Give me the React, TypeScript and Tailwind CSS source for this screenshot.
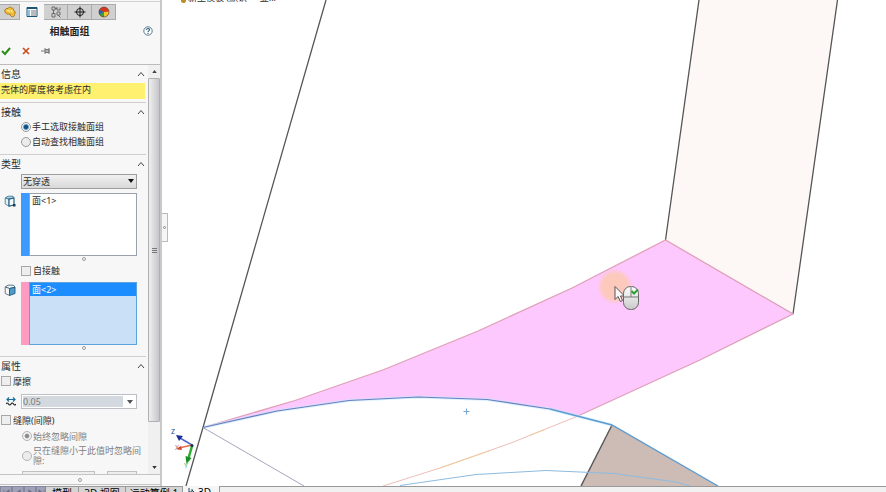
import { useState } from 'react';
import type { ReactNode } from 'react';

const RADIO =
  "size-[10px] shrink-0 appearance-none rounded-full border border-[#9a9a9a] bg-[#ececec] checked:bg-[radial-gradient(circle,#0d4f86_0_30%,#7fb2d6_48%,#f4f4f4_60%)] disabled:border-[#b4b4b4] disabled:checked:bg-[radial-gradient(circle,#8c8c8c_0_30%,#f1f1f1_50%)]";
const CHECK = "size-[10px] shrink-0 appearance-none border border-[#a8a8a8] bg-[#eeeeee] checked:bg-[#4a86b8]";

function Chevron() {
  return (
    <svg viewBox="0 0 8 6" className="h-[6px] w-[8px]" fill="none" stroke="#444" strokeWidth="1">
      <path d="M1 5 4 1.5 7 5" />
    </svg>
  );
}

function Section({ title, children }: { title: string; children: ReactNode }) {
  const [open, setOpen] = useState(true);
  return (
    <section className="border-b border-[#cfcfcf] pb-[3px] last:border-0">
      <h2 className="pt-px">
        <button type="button" onClick={() => setOpen(!open)} className="flex h-[16px] w-full items-center justify-between pr-px pl-px text-[10px] leading-none">
          {title}
          <Chevron />
        </button>
      </h2>
      {open && children}
    </section>
  );
}

function Handle() {
  return (
    <div className="flex h-[5px] items-center justify-center pl-[30px]">
      <span className="size-[4px] rounded-full border border-[#9b9b9b] bg-white" />
    </div>
  );
}

function FaceIcon({ solid }: { solid?: boolean }) {
  return (
    <svg viewBox="0 0 12 13" className="mt-[2px] h-[13px] w-[12px]" strokeLinejoin="round">
      {solid ? (
        <>
          <path d="M1.200 3 4 1.200h5.500L11 3.200 5.500 4.500z" fill="#f2f7fa" stroke="#35556a" strokeWidth=".8" />
          <path d="M1.200 3 5.500 4.500v7L1.200 9.500z" fill="#f6f6f6" stroke="#4a5d69" strokeWidth=".8" />
          <path d="M5.500 4.500 11 3.200v6.300l-5.500 2z" fill="#4f9bc9" stroke="#245a7c" strokeWidth=".9" />
        </>
      ) : (
        <>
          <path d="M1.200 3 4 1.200h5L10 3 5 4.200z" fill="#a9d2ea" stroke="#35708f" strokeWidth=".8" />
          <path d="M1.200 3 5 4.200v7L1.200 9z" fill="#e6f2f8" stroke="#35708f" strokeWidth=".8" />
          <path d="M5 4.200 10 3v7l-5 1.200z" fill="#f4f9fb" stroke="#2a5f80" strokeWidth="1.200" />
          <path d="M9 9h2.500v2.500H9z" fill="#16384c" />
        </>
      )}
    </svg>
  );
}

function TabIcon({ kind }: { kind: number }) {
  return (
    <svg viewBox="0 0 12 12" className="size-[12px]" fill="none">
      {kind === 0 && (
        <>
          <path d="M.8 5.500C.5 3.500 2 2 4 2.500 4.500 1 6.500.8 7.500 2c1.500-.3 2.300 1 2 2.200 1.800.8 2.200 3 1 4.300.2 1.800-1.500 2.800-3 2-1-.5-1.300-1.500-1.300-2.300C4 8.300 1.200 8 .8 5.500z" fill="#f0be3a" stroke="#9b6a0c" strokeWidth=".8" />
          <path d="M3 4.500c1.500-.5 2.500.3 3 1.500M7.500 4 8 6.500" stroke="#fff0a8" strokeWidth="1.200" />
        </>
      )}
      {kind === 1 && (
        <>
          <path d="M1 1.500h10v9H1z" fill="#fff" stroke="#1e5478" />
          <path d="M1 1h10v2H1z" fill="#1e5478" />
          <path d="M2 5h2M2 7h2M2 9h2" stroke="#1f82bd" strokeWidth="1.200" />
          <path d="M5 5h5M5 7h5M5 9h5" stroke="#777" />
        </>
      )}
      {kind === 2 && (
        <g stroke="#626262" strokeWidth=".9">
          <path d="M2 1h3v3H2zM2 7.500h3v3.500H2zM7 6h3v3H7zM3.500 4v3.500M5 2.500h2M7 1v3h3V1.500M8 9l2.500 2.500" />
        </g>
      )}
      {kind === 3 && (
        <g stroke="#181818">
          <circle cx="6" cy="6" r="3.500" />
          <path d="M6 .5v11M.5 6h11" />
        </g>
      )}
      {kind === 4 && (
        <>
          <circle cx="6" cy="6" r="5" fill="#d8351f" />
          <path d="M6 6 1.500 3.500A5 5 0 0 0 2 9z" fill="#3464a0" />
          <path d="M6 6 1.500 8.500A5 5 0 0 0 6 11z" fill="#35a044" />
          <path d="m6 6 5-.5a5 5 0 0 1-5 5.500z" fill="#f1c52c" />
          <circle cx="6" cy="6" r="5" stroke="#5b4238" strokeWidth=".6" />
        </>
      )}
    </svg>
  );
}

const PANEL_TABS = ['特征管理', '属性管理', '配置管理', '尺寸专家', '外观管理'];

function PropertyPanel() {
  const [tab, setTab] = useState(1);
  return (
    <aside className="flex w-[162px] shrink-0 flex-col border-r-2 border-[#c9c9c9] bg-[#f7f7f7]">
      <nav className="mt-px flex h-[19px] shrink-0 border-t border-[#d2d2d2] pt-[2px]">
        {PANEL_TABS.map((name, i) => (
          <button
            key={name}
            type="button"
            aria-label={name}
            onClick={() => setTab(i)}
            className={`flex h-[16px] items-center justify-center first:w-[20px] ${
              tab === i ? 'w-[24px] bg-[#f7f7f7]' : 'w-[24px] border border-l-0 border-[#a9a9a9] bg-[#d0d0d0]'
            }`}
          >
            <TabIcon kind={i} />
          </button>
        ))}
      </nav>
      <header className="flex h-[22px] shrink-0 items-center pr-[7px]">
        <h1 className="flex-1 pr-[4px] text-center text-[10px] leading-none font-bold text-[#222]">相触面组</h1>
        <button type="button" aria-label="帮助">
          <svg viewBox="0 0 10 10" className="size-[10px]" fill="none" stroke="#315e7c">
            <circle cx="5" cy="5" r="4.200" fill="#fff" strokeWidth=".8" />
            <path d="M3.500 4c0-2 3-2 3-.3C6.500 5 5 4.800 5 6.200M5 7v1" strokeWidth="1.100" />
          </svg>
        </button>
      </header>
      <div className="flex h-[23px] shrink-0 items-start gap-[10px] border-b border-[#bcbcbc] pt-[4px] pl-px">
        <button type="button" aria-label="确定">
          <svg viewBox="0 0 10 10" className="size-[10px]" fill="none" stroke="#2e8a16" strokeWidth="2"><path d="m1 5 3 3 5-6" /></svg>
        </button>
        <button type="button" aria-label="取消">
          <svg viewBox="0 0 10 10" className="size-[10px]" fill="none" stroke="#cc4d1c" strokeWidth="1.700"><path d="m2 2 6 6M8 2 2 8" /></svg>
        </button>
        <button type="button" aria-label="保持可见">
          <svg viewBox="0 0 10 10" className="size-[10px]" fill="none" stroke="#777"><path d="M0 5h4M4 2v6M4 3.500h4v3H4M8 2v6M4 5h4" /></svg>
        </button>
      </div>
      <div className="flex min-h-0 flex-1">
        <div className="min-w-0 flex-1 overflow-hidden">
          <Section title="信息">
            <p className="mt-px mr-px h-[16px] bg-[#fff06f] pl-px leading-[14px]">壳体的厚度将考虑在内</p>
          </Section>
          <Section title="接触">
            <div className="-mt-px flex flex-col pb-[2px] pl-[21px]">
              <label className="flex h-[15px] items-center gap-px">
                <input type="radio" name="pick" defaultChecked className={RADIO} />
                手工选取接触面组
              </label>
              <label className="flex h-[15px] items-center gap-px">
                <input type="radio" name="pick" className={RADIO} />
                自动查找相触面组
              </label>
            </div>
          </Section>
          <Section title="类型">
            <div className="mt-[2px] pr-[9px]">
              <div className="relative ml-[21px]">
                <select aria-label="接触类型" className="block h-[15px] w-full appearance-none border border-[#9d9d9d] bg-linear-to-b from-[#f1f1f1] to-[#d9d9d9] pl-px leading-none">
                  <option>无穿透</option>
                  <option>接合</option>
                </select>
                <svg viewBox="0 0 6 4" className="pointer-events-none absolute top-[5px] right-[3px] h-[4px] w-[6px]"><path d="M0 0h6L3 4z" fill="#111" /></svg>
              </div>
              <div className="mt-[4px] flex">
                <div className="w-[21px] shrink-0 pl-[4px]"><FaceIcon /></div>
                <div className="w-[8px] bg-[#3d9bff]" />
                <ul role="listbox" aria-label="面组 1" className="h-[63px] flex-1 border border-[#9aa3ad] bg-white">
                  <li role="option" aria-selected="false" className="pl-[2px] leading-[14px]">面&lt;1&gt;</li>
                </ul>
              </div>
              <Handle />
              <label className="mt-[4px] flex h-[11px] items-center gap-[2px] pl-[21px]">
                <input type="checkbox" className={CHECK} />
                自接触
              </label>
              <div className="mt-[6px] flex">
                <div className="w-[21px] shrink-0 pl-[4px]"><FaceIcon solid /></div>
                <div className="w-[8px] bg-[#ff9ac0]" />
                <ul role="listbox" aria-label="面组 2" className="h-[63px] flex-1 border border-[#5ba3dc] bg-[#c9e0f7]">
                  <li role="option" aria-selected="true" className="h-[13px] bg-[#1c8dff] pl-[2px] leading-[13px] text-white">面&lt;2&gt;</li>
                </ul>
              </div>
              <Handle />
            </div>
            <div className="h-[3px]" />
          </Section>
          <Section title="属性">
            <label className="flex h-[14px] items-center gap-[2px] pl-px">
              <input type="checkbox" className={CHECK} />
              摩擦
            </label>
            <div className="mt-[6px] flex h-[15px] items-center pr-[9px]">
              <div className="w-[21px] shrink-0 pl-[6px]">
                <svg viewBox="0 0 10 9" className="h-[9px] w-[10px]" fill="none" strokeWidth="1.200">
                  <path d="M1 2.500h8M3 .5l-2 2 2 2M7 .5l2 2-2 2" stroke="#1d6f9c" />
                  <path d="M0 7q1.200-2 2.500 0t2.500 0 2.500 0 2.500 0" stroke="#222" />
                </svg>
              </div>
              <div className="flex h-full min-w-0 flex-1 border border-[#bcc0c4] bg-white">
                <input aria-label="摩擦系数" disabled defaultValue="0.05" className="my-px ml-px min-w-0 flex-1 bg-[#d3d9de] text-[#7c7c7c]" />
                <button type="button" aria-label="系数列表" disabled className="flex w-[13px] items-center justify-center">
                  <svg viewBox="0 0 6 4" className="h-[4px] w-[6px]"><path d="M0 0h6L3 4z" fill="#555" /></svg>
                </button>
              </div>
            </div>
            <label className="mt-[4px] flex h-[14px] items-center gap-[2px] pl-px">
              <input type="checkbox" className={CHECK} />
              缝隙(间隙)
            </label>
            <div className="mt-[2px] flex flex-col gap-px pl-[22px] text-[#808080]">
              <label className="flex h-[14px] items-center gap-px">
                <input type="radio" name="gap" disabled defaultChecked className={RADIO} />
                始终忽略间隙
              </label>
              <label className="mt-[2px] flex items-center gap-px leading-[10px]">
                <input type="radio" name="gap" disabled className={RADIO} />
                只在缝隙小于此值时忽略间隙:
              </label>
              <div className="mt-[4px] flex gap-[12px] pr-[9px]">
                <input aria-label="间隙值" disabled className="h-[15px] min-w-0 flex-1 border border-[#c0c0c0] bg-[#eee]" />
                <input aria-label="单位" disabled className="h-[15px] w-[30px] border border-[#c0c0c0] bg-[#eee]" />
              </div>
            </div>
          </Section>
        </div>
        <div className="ml-[2px] flex w-[12px] shrink-0 flex-col items-center bg-[#f0f0f0]">
          <button type="button" aria-label="向上滚动" className="flex h-[13px] w-full items-center justify-center">
            <svg viewBox="0 0 6 4" className="h-[3px] w-[5px]"><path d="M0 4h6L3 0z" fill="#444" /></svg>
          </button>
          <div className="flex h-[344px] w-full flex-col items-center justify-center gap-px rounded-[1px] border border-[#b0b0b0] bg-linear-to-r from-[#efefef] to-[#c6c6cb]">
            <span className="h-px w-[5px] bg-[#777]" />
            <span className="h-px w-[5px] bg-[#777]" />
            <span className="h-px w-[5px] bg-[#777]" />
          </div>
          <button type="button" aria-label="向下滚动" className="mt-auto flex h-[13px] w-full items-center justify-center">
            <svg viewBox="0 0 6 4" className="h-[3px] w-[5px]"><path d="M0 0h6L3 4z" fill="#333" /></svg>
          </button>
        </div>
      </div>
      <footer className="mb-px flex h-[11px] shrink-0 items-center justify-center border-y border-[#c4c4c4]">
        <span className="size-[4px] rounded-full border border-[#9b9b9b] bg-white" />
      </footer>
    </aside>
  );
}

function Viewport() {
  return (
    <main className="relative min-w-0 flex-1 overflow-hidden bg-white">
      <svg viewBox="162 0 724 486" className="block h-full w-full" preserveAspectRatio="xMinYMin slice" fill="none">
        <defs>
          <linearGradient id="mouse" x1="0" y1="0" x2="0" y2="1">
            <stop offset="0" stopColor="#fff" />
            <stop offset="1" stopColor="#c9c9c9" />
          </linearGradient>
          <radialGradient id="glow">
            <stop offset=".7" stopColor="#fdc9bd" />
            <stop offset="1" stopColor="#fdc9bd" stopOpacity="0" />
          </radialGradient>
        </defs>
        <path d="M699 0h139l-45 314-128-74z" fill="#fdf8f5" />
        <path d="M699 0 665.500 240M837.500 0 793 314" stroke="#555" strokeWidth="1.300" />
        <path d="M203 427.500 295 400.500 384 369.500 478 331 572 288 665.500 240 793 314 700 360 578 416 550 409 487 399.500 418 397 349 400.500 277 411z" fill="#fdc8fd" />
        <path d="M203 427.500 295 400.500 384 369.500 478 331 572 288 665.500 240 793 314 700 360 578 416" stroke="#dfa0b8" strokeWidth="1.300" />
        <path d="M578 416 511 443 440 468 383 486" stroke="#edbdb9" />
        <path d="m545 429.500-16 6M489 451l-49 17" stroke="#efcf9e" />
        <path d="M612 425 717 486H581z" fill="#cdbbb5" />
        <path d="M612 425 581 486" stroke="#555" strokeWidth="1.400" />
        <path d="M203 427.500 277 411 349 400.500 418 397 487 399.500 550 409 612 425" stroke="#c5eaff" strokeWidth="3" opacity=".6" />
        <path d="M203 427.500 277 411 349 400.500 418 397 487 399.500 550 409" stroke="#6980be" strokeWidth="1.200" />
        <path d="M550 409 612 425 718 486" stroke="#5d9bd0" strokeWidth="1.400" />
        <path d="M400 485.500 476 474.500 546 470.500 614 473.500 676 482 690 486" stroke="#8dbbe0" />
        <path d="M326 0 203 427.500 186 486" stroke="#555" strokeWidth="1.300" />
        <path d="m203 427.500 101 58.500" stroke="#a6a6bd" />
        <path d="M466.500 408.500v6M463.500 411.500h6" stroke="#79a6d4" />
        <circle cx="615" cy="286.500" r="18" fill="url(#glow)" />
        <path d="M615 286.500v13l3-3 2.500 5 2-1-2-4.500h4z" fill="#f8f8f8" stroke="#555" />
        <rect x="623.500" y="286.500" width="15" height="23" rx="7" fill="url(#mouse)" stroke="#666" />
        <path d="M623.500 297h15M631 287v10" stroke="#777" />
        <path d="m631.500 291 2.500 2.500 4-4" stroke="#2b9e35" strokeWidth="2" />
        <path d="m192 445-12-7" stroke="#5265c8" strokeWidth="1.500" />
        <path d="m176 435 7 1-4 5z" fill="#1c2d98" />
        <path d="m192 445-13 3" stroke="#e5704b" strokeWidth="1.500" />
        <path d="m176 449 5-3 1 4z" fill="#d2432f" />
        <path d="m192 446-4 14" stroke="#2fae35" strokeWidth="2.500" />
        <path d="m186.500 464-1-8 6 2z" fill="#159022" />
        <circle cx="192" cy="445.500" r="1.500" fill="#1a2b50" />
        <text x="171" y="434" fontSize="7" fill="#303e9c">Z</text>
        <text x="175" y="450" fontSize="7" fill="#c56a5a">X</text>
        <text x="184" y="468" fontSize="7" fill="#4fb556">Y</text>
      </svg>
      <button type="button" aria-label="折叠面板" className="absolute top-[213px] -left-px flex h-[29px] w-[7px] items-center justify-center border border-[#bbb] bg-[#f6f6f6]">
        <span className="size-[3px] rounded-full border border-[#888]" />
      </button>
      <div className="absolute -top-[7px] left-[19px] flex items-center gap-[2px] leading-[10px] whitespace-nowrap">
        <span className="mt-[4px] size-[5px] rounded-full bg-[#b79020]" />
        新型模板 (默认&lt; - 显...
      </div>
    </main>
  );
}

const VIEW_TABS = [
  { name: '模型', width: 'w-[33px]' },
  { name: '3D 视图', width: 'w-[47px]' },
  { name: '运动算例 1', width: 'w-[57px]' },
];

const STEPS = [
  { name: '第一个', path: 'M1 1v6M7 1 3 4l4 3z' },
  { name: '上一个', path: 'M6 1 2 4l4 3z' },
  { name: '下一个', path: 'm2 1 4 3-4 3z' },
  { name: '最后一个', path: 'm1 1 4 3-4 3zM7 1v6' },
];

export default function App() {
  return (
    <div className="flex h-screen flex-col overflow-hidden bg-white font-['Noto_Sans','Noto_Sans_CJK_SC',sans-serif] text-[9px] leading-none text-[#2b2b2b]">
      <div className="flex min-h-0 flex-1">
        <PropertyPanel />
        <Viewport />
      </div>
      <footer className="flex h-[6px] shrink-0 overflow-hidden bg-[#f1f1f1]">
        <div className="flex h-[16px] bg-[#9fa1b7]">
          {STEPS.map((s) => (
            <button key={s.name} type="button" aria-label={s.name} className="flex w-[12px] items-start justify-center border border-[#8587a0] pt-[2px] last:w-[10px]">
              <svg viewBox="0 0 8 8" className="size-[7px]" fill="#686b88" stroke="#686b88" strokeWidth=".8"><path d={s.path} /></svg>
            </button>
          ))}
        </div>
        {VIEW_TABS.map((t) => (
          <button key={t.name} type="button" className={`flex h-[16px] shrink-0 items-start justify-center border-t border-r border-[#999] bg-[#d5d5d5] text-[10px] leading-[12px] whitespace-nowrap text-black ${t.width}`}>
            {t.name}
          </button>
        ))}
        <button type="button" className="flex h-[16px] w-[37px] shrink-0 items-start gap-[3px] border-r border-[#999] bg-[#f5f5f5] pl-[5px] text-[10px] leading-[13px] text-black">
          <svg viewBox="0 0 7 8" className="mt-[2px] h-[8px] w-[7px]" fill="none" stroke="#234a63"><path d="M1 0v8M1 4h3M4 1v5M4 2l2 2" /></svg>
          3D
        </button>
        <div className="flex-1 border-t border-[#999]" />
      </footer>
    </div>
  );
}
